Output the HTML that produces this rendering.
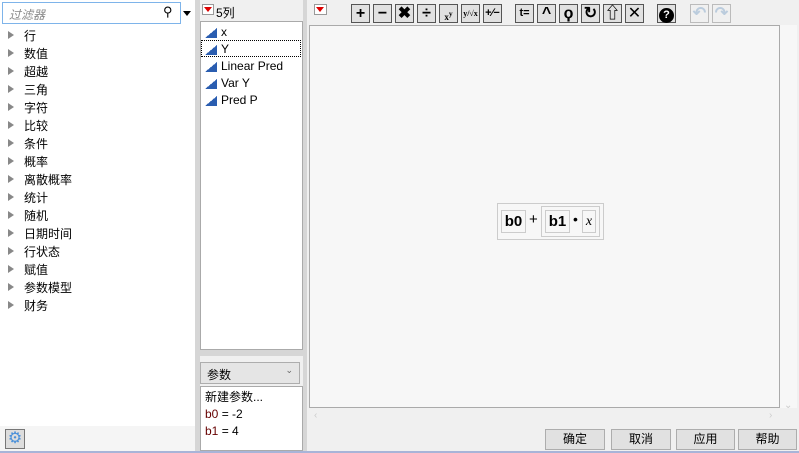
<!DOCTYPE html><html><head><meta charset="utf-8"><style>
*{box-sizing:border-box;margin:0;padding:0}
body{width:799px;height:453px;background:#f0f0f0;font-family:"Liberation Sans","Noto Sans CJK SC",sans-serif;font-size:12px;position:relative;overflow:hidden;color:#000}
.a{position:absolute}
.tb{position:absolute;top:4px;width:19px;height:19px;background:#e1e1e1;border:1px solid #555;font-weight:bold;font-size:16px;text-align:center;line-height:17px}
.li{position:absolute;left:24px;font-size:12px}
.tri{position:absolute;left:8px;width:0;height:0;border-left:6px solid #888;border-top:4px solid transparent;border-bottom:4px solid transparent}
.ci{position:absolute;left:205px;width:12px;height:10px;background:linear-gradient(to top left,#2a5db0 50%,transparent 50%)}
.btn{position:absolute;top:429px;height:21px;background:#e1e1e1;border:1px solid #adadad;text-align:center;line-height:19px}
</style></head><body>
<div class="a" style="left:0;top:0;width:195px;height:426px;background:#fff"></div>
<div class="a" style="left:2px;top:2px;width:179px;height:22px;border:1px solid #7eb4ea;background:#fff"><span style="position:absolute;left:6px;top:3px;color:#888;font-style:italic">过滤器</span><span style="position:absolute;left:160px;top:1px;font-size:13px">⚲</span></div>
<div class="a" style="left:183px;top:11px;border-left:4px solid transparent;border-right:4px solid transparent;border-top:5px solid #000"></div>
<div class="a" style="left:195px;top:0;width:5px;height:453px;background:#d6d6d6"></div>
<div class="a" style="left:0;top:426px;width:195px;height:25px;background:#f5f5f5"></div>
<div class="a" style="left:5px;top:429px;width:20px;height:20px;border:1px solid #777;background:#ddd;color:#4a90d9;font-size:16px;line-height:18px;text-align:center">⚙</div>
<div class="a" style="left:202px;top:4px;width:12px;height:11px;border:1px solid #999;background:#fff"></div>
<div class="a" style="left:204px;top:7px;border-left:4px solid transparent;border-right:4px solid transparent;border-top:5px solid #d00"></div>
<div class="a" style="left:216px;top:4px">5列</div>
<div class="a" style="left:200px;top:21px;width:103px;height:329px;background:#fff;border:1px solid #aaa"></div>
<div class="a" style="left:201px;top:40px;width:100px;height:17px;border:1px dotted #000"></div>
<div class="a" style="left:200px;top:350px;width:103px;height:6px;background:#d6d6d6"></div>
<div class="a" style="left:200px;top:362px;width:100px;height:22px;background:#e5e5e5;border:1px solid #adadad"><span style="position:absolute;left:6px;top:3px">参数</span><span style="position:absolute;right:6px;top:2px;font-size:9px;color:#666">⌄</span></div>
<div class="a" style="left:200px;top:386px;width:103px;height:65px;background:#fff;border:1px solid #aaa;padding:2px 4px;line-height:17px">新建参数...<br><span style="color:#600">b0</span> = -2<br><span style="color:#600">b1</span> = 4</div>
<div class="a" style="left:303px;top:0;width:4px;height:453px;background:#d6d6d6"></div>
<div class="a" style="left:314px;top:4px;width:13px;height:11px;border:1px solid #999;background:#fff"></div>
<div class="a" style="left:316px;top:7px;border-left:4px solid transparent;border-right:4px solid transparent;border-top:5px solid #d00"></div>
<div class="tb" style="left:351px">+</div><div class="tb" style="left:373px">−</div><div class="tb" style="left:395px">✖</div><div class="tb" style="left:417px">÷</div><div class="tb" style="left:439px;font-size:9px;font-family:Liberation Serif">x<sup>y</sup></div><div class="tb" style="left:461px;font-size:8px;font-family:Liberation Serif">y/√x</div><div class="tb" style="left:483px;font-size:11px">+∕−</div>
<div class="tb" style="left:515px;font-size:11px">t=</div><div class="tb" style="left:537px">^</div><div class="tb" style="left:559px">ϙ</div><div class="tb" style="left:581px">↻</div><div class="tb" style="left:603px">⇧</div><div class="tb" style="left:625px;font-weight:normal">✕</div>
<div class="tb" style="left:657px;background:#e1e1e1"><span style="display:inline-block;width:15px;height:15px;border-radius:50%;background:#000;color:#fff;font-size:11px;line-height:15px;margin-top:1px">?</span></div>
<div class="tb" style="left:690px;border-color:#bbb;color:#bcd;background:#f0f0f0">↶</div><div class="tb" style="left:712px;border-color:#bbb;color:#bcd;background:#f0f0f0">↷</div>
<div class="a" style="left:309px;top:25px;width:488px;height:383px;background:#f7f7f7"></div>
<div class="a" style="left:309px;top:25px;width:471px;height:383px;border:1px solid #aaa"></div>
<div class="a" style="left:309px;top:408px;width:488px;height:18px;background:#f0f0f0;color:#ccc;font-size:10px"><span style="position:absolute;left:5px;top:2px">‹</span><span style="position:absolute;left:460px;top:2px">›</span></div>
<div class="a" style="left:784px;top:400px;color:#ccc;font-size:10px">⌄</div>
<div class="a" style="left:497px;top:203px;width:107px;height:37px;border:1px solid #ccc"></div>
<div class="a" style="left:501px;top:210px;width:25px;height:23px;border:1px solid #ccc;font-weight:bold;font-size:15px;text-align:center;line-height:21px">b0</div>
<div class="a" style="left:529px;top:211px;font-size:15px">+</div>
<div class="a" style="left:541px;top:206px;width:59px;height:31px;border:1px solid #ccc"></div>
<div class="a" style="left:545px;top:210px;width:25px;height:23px;border:1px solid #ccc;font-weight:bold;font-size:15px;text-align:center;line-height:21px">b1</div>
<div class="a" style="left:573px;top:211px;font-size:14px">•</div>
<div class="a" style="left:582px;top:210px;width:14px;height:23px;border:1px solid #ccc;font-style:italic;font-size:14px;text-align:center;line-height:21px;font-family:Liberation Serif">x</div>
<div class="btn" style="left:545px;width:60px">确定</div><div class="btn" style="left:611px;width:60px">取消</div><div class="btn" style="left:676px;width:59px">应用</div><div class="btn" style="left:738px;width:59px">帮助</div>
<div class="a" style="left:0;top:451px;width:799px;height:2px;background:#a8b4d8"></div>
<div class="tri" style="top:31px"></div><div class="li" style="top:27px">行</div>
<div class="tri" style="top:49px"></div><div class="li" style="top:45px">数值</div>
<div class="tri" style="top:67px"></div><div class="li" style="top:63px">超越</div>
<div class="tri" style="top:85px"></div><div class="li" style="top:81px">三角</div>
<div class="tri" style="top:103px"></div><div class="li" style="top:99px">字符</div>
<div class="tri" style="top:121px"></div><div class="li" style="top:117px">比较</div>
<div class="tri" style="top:139px"></div><div class="li" style="top:135px">条件</div>
<div class="tri" style="top:157px"></div><div class="li" style="top:153px">概率</div>
<div class="tri" style="top:175px"></div><div class="li" style="top:171px">离散概率</div>
<div class="tri" style="top:193px"></div><div class="li" style="top:189px">统计</div>
<div class="tri" style="top:211px"></div><div class="li" style="top:207px">随机</div>
<div class="tri" style="top:229px"></div><div class="li" style="top:225px">日期时间</div>
<div class="tri" style="top:247px"></div><div class="li" style="top:243px">行状态</div>
<div class="tri" style="top:265px"></div><div class="li" style="top:261px">赋值</div>
<div class="tri" style="top:283px"></div><div class="li" style="top:279px">参数模型</div>
<div class="tri" style="top:301px"></div><div class="li" style="top:297px">财务</div>
<div class="ci" style="top:28px"></div><div class="a" style="left:221px;top:25px">x</div>
<div class="ci" style="top:45px"></div><div class="a" style="left:221px;top:42px">Y</div>
<div class="ci" style="top:62px"></div><div class="a" style="left:221px;top:59px">Linear Pred</div>
<div class="ci" style="top:79px"></div><div class="a" style="left:221px;top:76px">Var Y</div>
<div class="ci" style="top:96px"></div><div class="a" style="left:221px;top:93px">Pred P</div>
</body></html>
